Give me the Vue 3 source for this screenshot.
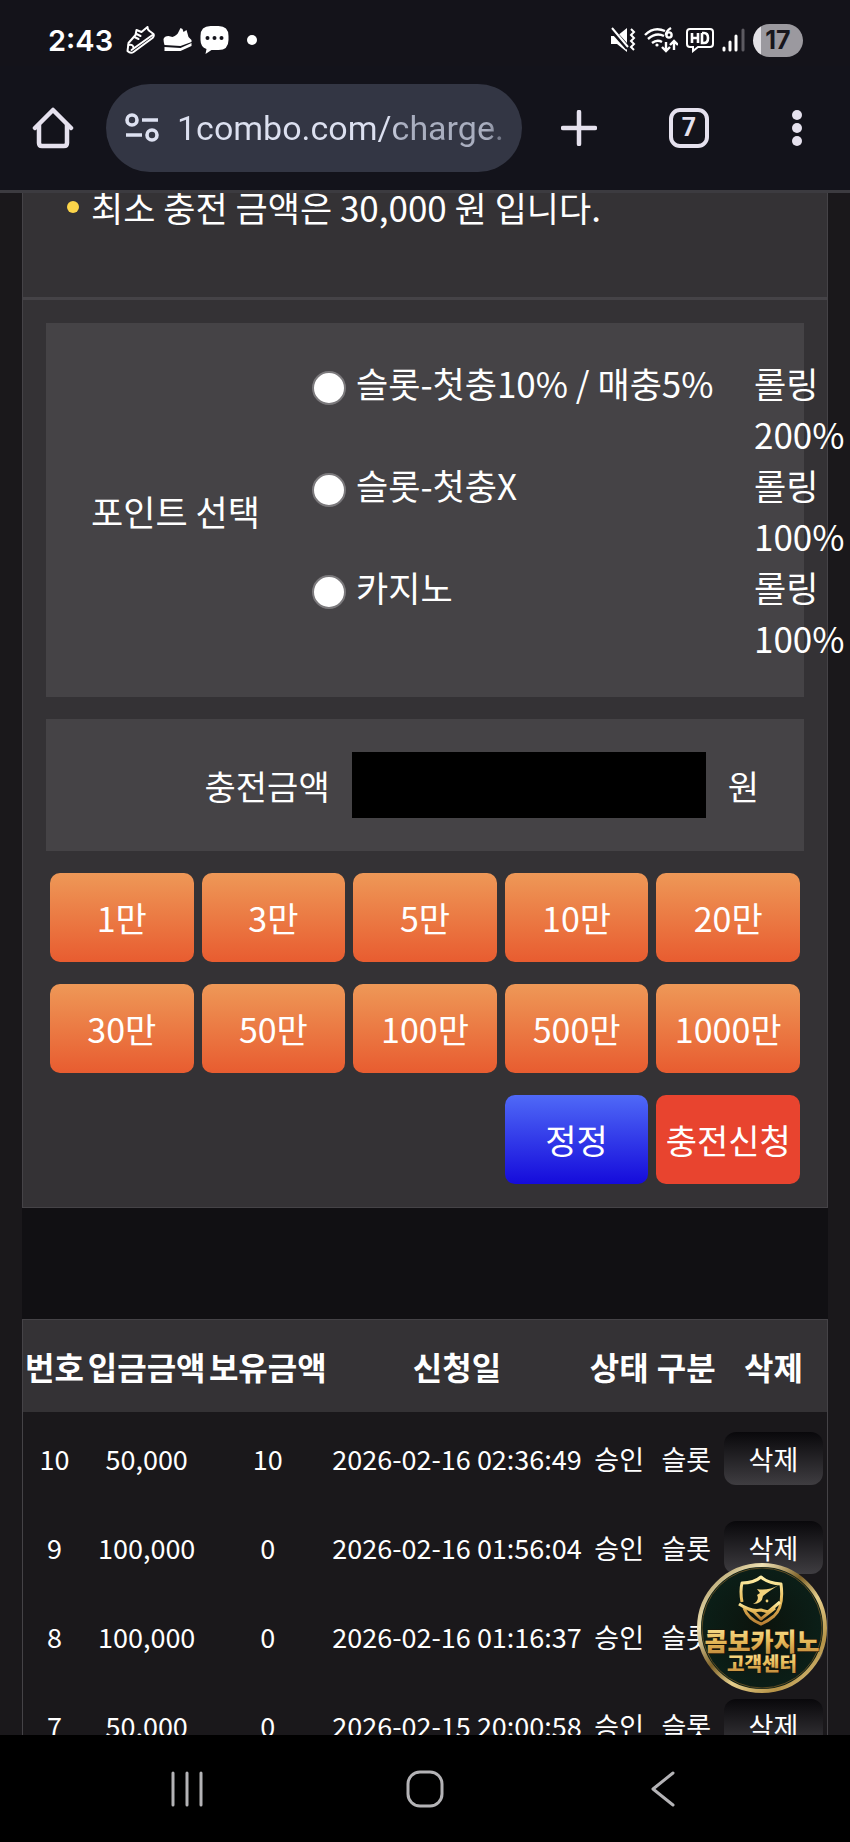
<template>
  <div class="screen">
    <header class="status-bar">
      <div class="status-left">
        <span class="clock">2:43</span>
        <svg class="status-icon" viewBox="0 0 28 28" fill="none" stroke="#fff" stroke-width="2" stroke-linejoin="round" stroke-linecap="round">
          <path d="M1 25 L2 17 L9 9 L10 4 L15 6 L21 1 Q21 4 23 5 L27 8 Q28 10 26 12 L7 26 Q4 28 1 25Z" />
          <path d="M2 19 Q7 18 7 22 M5 24 L26 9 M8 11 l4 2 M10 8 l4 2" />
        </svg>
        <svg class="status-icon" viewBox="0 0 28 28" fill="#fff">
          <path d="M0 13 Q1 10 5 10 L9 11 Q14 9 15 6 L17 2 L19 3 L20 6 L23 4 L25 11 L28 14 L28 16 L17 20 L1 19 Q0 16 0 13Z" />
          <path d="M1 21 L17 22 L28 17 L28 20 L17 25 L1 25Z" />
        </svg>
        <svg class="status-icon" viewBox="0 0 28 28">
          <path d="M10 0 H18 Q28 0 28 10 V14 Q28 24 18 24 H11 L5 28 L6 23 Q0 21 0 14 V10 Q0 0 10 0Z" fill="#fff" />
          <g fill="#14131a">
            <circle cx="7" cy="12" r="2" />
            <circle cx="14" cy="12" r="2" />
            <circle cx="21" cy="12" r="2" />
          </g>
        </svg>
        <span class="more-dot"></span>
      </div>
      <div class="status-right">
        <svg width="25" height="26" viewBox="0 0 25 26" fill="#fff">
          <path d="M0 9 H6 L16 1 V25 L6 17 H0Z" />
          <path d="M0 2 L17 21" stroke="#14131a" stroke-width="5" />
          <path d="M1 1 L17 20 M20 2 l3 3 l-3 3 l3 3 l-3 3 l3 3 l-3 3 l3 3" fill="none" stroke="#fff" stroke-width="2" />
        </svg>
        <svg width="34" height="26" viewBox="0 0 34 26" fill="none" stroke="#fff" stroke-width="2.4">
          <path d="M1 8 Q10 -1 21 4 M4 12 Q12 5 20 9 M8 16 Q13 12 18 15" />
          <circle cx="13" cy="18" r="1.6" fill="#fff" stroke="none" />
          <path d="M27 1 Q22 4 22 8" />
          <circle cx="25" cy="8" r="2.6" />
          <path d="M22 15 V24 M18 20 L22 24 L26 20 M30 23 V14 M26 18 L30 14 L34 18" />
        </svg>
        <svg width="28" height="26" viewBox="0 0 28 26" fill="none" stroke="#fff" stroke-width="2">
          <path d="M4 2 H24 Q27 2 27 5 V17 Q27 20 24 20 H12 L7 24 V20 H4 Q1 20 1 17 V5 Q1 2 4 2Z" />
          <path d="M6 6 V16 M12 6 V16 M6 11 H12 M16 6 V16 H18 Q22 16 22 11 Q22 6 18 6 H16" stroke-width="2.6" />
        </svg>
        <svg width="23" height="24" viewBox="0 0 23 24" stroke="#fff" stroke-width="3" stroke-linecap="round">
          <path d="M2 20 V22 M8 14 V22 M14 8 V22" />
          <path d="M21 2 V22" stroke="#5c5a61" />
        </svg>
        <span class="battery">17</span>
      </div>
    </header>

    <nav class="toolbar">
      <button type="button" class="tool" aria-label="홈">
        <svg width="42" height="42" viewBox="0 0 42 42" fill="none" stroke="#e5e1ee" stroke-width="4.5" stroke-linejoin="round" stroke-linecap="round">
          <path d="M3 21 L21 3 L39 21" />
          <path d="M7 18 V36 Q7 39 10 39 H32 Q35 39 35 36 V18" />
        </svg>
      </button>
      <label class="address">
        <svg width="34" height="30" viewBox="0 0 34 30" fill="none" stroke="#dde1f1" stroke-width="3.6">
          <circle cx="7" cy="7" r="5" />
          <path d="M17 7 H33 M1 22 H17" />
          <circle cx="27" cy="22" r="5" />
        </svg>
        <input v-model="url" type="text" aria-label="주소" spellcheck="false" />
      </label>
      <button type="button" class="tool" aria-label="새 탭">
        <svg width="36" height="36" viewBox="0 0 36 36" stroke="#e5e1ee" stroke-width="4.5" stroke-linecap="round">
          <path d="M18 2 V34 M2 18 H34" />
        </svg>
      </button>
      <button type="button" class="tool"><span class="tab-count">7</span></button>
      <button type="button" class="tool" aria-label="메뉴">
        <svg width="12" height="38" viewBox="0 0 12 38" fill="#e5e1ee">
          <circle cx="6" cy="6" r="5" />
          <circle cx="6" cy="19" r="5" />
          <circle cx="6" cy="32" r="5" />
        </svg>
      </button>
    </nav>

    <div class="viewport">
      <main class="page">
        <ul class="notice">
          <li>최소 충전 금액은 30,000 원 입니다.</li>
        </ul>

        <form class="panel" @submit.prevent>
          <fieldset class="card points">
            <span class="points-title">포인트 선택</span>
            <div class="options">
              <div v-for="(option, i) in options" :key="i" class="option">
                <label>
                  <input v-model="selected" type="radio" name="point" :value="i" />
                  <span>{{ option.name }}</span>
                </label>
                <span class="rolling">롤링 {{ option.rolling }}</span>
              </div>
            </div>
          </fieldset>

          <div class="card amount">
            <label for="amount">충전금액</label>
            <input id="amount" v-model="amount" type="text" />
            <span>원</span>
          </div>

          <div class="buttons">
            <button
              v-for="value in amounts"
              :key="value"
              type="button"
              class="btn"
              @click="addAmount(value)"
            >
              {{ value }}만
            </button>
            <button type="button" class="btn reset" @click="amount = ''">정정</button>
            <button type="submit" class="btn submit">충전신청</button>
          </div>
        </form>

        <table class="history">
          <colgroup>
            <col class="col-no" />
            <col class="col-money" />
            <col class="col-money" />
            <col class="col-date" />
            <col class="col-short" />
            <col class="col-short" />
            <col class="col-delete" />
          </colgroup>
          <thead>
            <tr>
              <th v-for="title in titles" :key="title">{{ title }}</th>
            </tr>
          </thead>
          <tbody>
            <tr v-for="row in rows" :key="row.no">
              <td>{{ row.no }}</td>
              <td>{{ row.deposit }}</td>
              <td>{{ row.balance }}</td>
              <td>{{ row.date }}</td>
              <td>승인</td>
              <td>슬롯</td>
              <td>
                <button type="button" class="delete" @click="removeRow(row.no)">삭제</button>
              </td>
            </tr>
          </tbody>
        </table>
      </main>

      <a href="#support" class="support">
        <svg viewBox="0 0 132 132">
          <defs>
            <linearGradient id="ring" x1="0" y1="0" x2="1" y2="1">
              <stop offset="0" stop-color="#8d7a45" />
              <stop offset="0.25" stop-color="#f0e2b4" />
              <stop offset="0.45" stop-color="#7d6128" />
              <stop offset="0.6" stop-color="#e6cf8d" />
              <stop offset="0.8" stop-color="#b59246" />
              <stop offset="1" stop-color="#efdfa6" />
            </linearGradient>
            <linearGradient id="gold" x1="0" y1="0" x2="0" y2="1">
              <stop offset="0" stop-color="#fff0a8" />
              <stop offset="0.5" stop-color="#e9bd5c" />
              <stop offset="1" stop-color="#b87f34" />
            </linearGradient>
            <radialGradient id="face">
              <stop offset="0" stop-color="#0c130c" />
              <stop offset="1" stop-color="#0b1f18" />
            </radialGradient>
          </defs>
          <circle cx="66" cy="66" r="63" fill="url(#face)" stroke="url(#ring)" stroke-width="4" />
          <circle cx="66" cy="66" r="60" fill="none" stroke="#5b4a22" stroke-width="1" />
          <g fill="none" stroke="url(#gold)" stroke-width="3" stroke-linejoin="round">
            <path d="M46 40 Q44 29 46 21 Q58 21 65 15 Q72 21 85 22 Q88 45 78 54 Q72 59 65 62 Q52 57 48 46" />
            <path d="M43 42 Q55 50 65 48 L72 50 L84 40 M50 46 L58 50 L65 57 L79 46" />
          </g>
          <path d="M61 27 Q72 29 83 23 Q73 29 67 34 Q66 42 57 42 Q64 38 61 33 L64 31Z" fill="#f3d27c" />
          <circle cx="71" cy="39" r="1.4" fill="#f0cf78" />
          <text x="66" y="89" class="support-name">콤보카지노</text>
          <text x="66" y="109" class="support-sub">고객센터</text>
        </svg>
      </a>
    </div>

    <nav class="system-nav">
      <button type="button" aria-label="최근 앱">
        <svg width="36" height="38" viewBox="0 0 36 38" stroke="#b4b3b6" stroke-width="3" stroke-linecap="round">
          <path d="M4 3 V35 M18 3 V35 M32 3 V35" />
        </svg>
      </button>
      <button type="button" aria-label="홈 화면">
        <svg width="38" height="38" viewBox="0 0 38 38" fill="none" stroke="#b4b3b6" stroke-width="3">
          <rect x="2" y="2" width="34" height="34" rx="12" />
        </svg>
      </button>
      <button type="button" aria-label="뒤로">
        <svg width="26" height="38" viewBox="0 0 26 38" fill="none" stroke="#b4b3b6" stroke-width="3" stroke-linecap="round" stroke-linejoin="round">
          <path d="M23 3 L3 19 L23 35" />
        </svg>
      </button>
    </nav>
  </div>
</template>

<script setup>
import { ref } from "vue";

const url = ref("1combo.com/charge.");
const selected = ref(null);
const amount = ref("");

const options = [
  { name: "슬롯-첫충10% / 매충5%", rolling: "200%" },
  { name: "슬롯-첫충X", rolling: "100%" },
  { name: "카지노", rolling: "100%" },
];

const amounts = [1, 3, 5, 10, 20, 30, 50, 100, 500, 1000];

const titles = ["번호", "입금금액", "보유금액", "신청일", "상태", "구분", "삭제"];

const rows = ref([
  { no: 10, deposit: "50,000", balance: 10, date: "2026-02-16 02:36:49" },
  { no: 9, deposit: "100,000", balance: 0, date: "2026-02-16 01:56:04" },
  { no: 8, deposit: "100,000", balance: 0, date: "2026-02-16 01:16:37" },
  { no: 7, deposit: "50,000", balance: 0, date: "2026-02-15 20:00:58" },
]);

const addAmount = (value) => {
  amount.value = String(Number(amount.value) + value * 10000);
};

const removeRow = (no) => {
  rows.value = rows.value.filter((row) => row.no !== no);
};
</script>

<style>
body {
  margin: 0;
  background-color: #1a181b;
}
</style>

<style scoped>
.screen {
  display: flex;
  flex-direction: column;
  height: 100vh;
  overflow: hidden;
  background-color: #1a181b;
  color: #fff;
  font-family: "Noto Sans CJK KR", sans-serif;
  font-size: 34px;
  line-height: 51px;
  word-break: keep-all;
}
button,
input {
  margin: 0;
  padding: 0;
  border: 0;
  color: inherit;
  font: inherit;
}
button {
  background: none;
  cursor: pointer;
}
svg {
  display: block;
}

.status-bar {
  display: flex;
  justify-content: space-between;
  align-items: center;
  height: 52px;
  padding: 14px 47px 0 48px;
  background-color: #14131a;
}
.status-left,
.status-right {
  display: flex;
  align-items: center;
  gap: 8px;
}
.clock {
  margin-right: 5px;
  font-family: Inter, sans-serif;
  font-size: 29px;
  font-weight: 600;
}
.status-icon {
  width: 29px;
  height: 28px;
}
.more-dot {
  width: 10px;
  height: 10px;
  margin-left: 10px;
  border-radius: 50%;
  background-color: #fff;
}
.battery {
  width: 50px;
  border-radius: 17px;
  background: linear-gradient(to right, #e3e1e6 8px, #9b999f 8px);
  color: #17161c;
  font-family: Inter, sans-serif;
  font-size: 25px;
  font-weight: 700;
  line-height: 33px;
  text-align: center;
}

.toolbar {
  display: grid;
  grid-template-columns: 106px minmax(0, 1fr) 110px 110px 106px;
  align-items: center;
  height: 124px;
  border-bottom: 3px solid #3c3b40;
  background-color: #13131b;
}
.tool {
  display: flex;
  justify-content: center;
  align-items: center;
  height: 88px;
}
.address {
  display: flex;
  align-items: center;
  gap: 18px;
  height: 88px;
  margin-right: 2px;
  padding: 0 16px 0 19px;
  box-sizing: border-box;
  border-radius: 44px;
  background-color: #333644;
}
.address svg {
  flex: none;
}
.address input {
  flex: 1;
  min-width: 0;
  outline: none;
  background: linear-gradient(to right, #dce0f0 210px, #a9aebf 225px, #a9aebf 310px, #6a6e7e 325px);
  background-clip: text;
  color: transparent;
  font-family: Roboto, sans-serif;
  font-size: 34px;
}
.tab-count {
  width: 40px;
  box-sizing: border-box;
  border: 4px solid #e5e1ee;
  border-radius: 11px;
  color: #e5e1ee;
  font-family: Roboto, sans-serif;
  font-size: 25px;
  font-weight: 700;
  line-height: 32px;
}

.viewport {
  position: relative;
  flex: 1;
  min-height: 0;
  overflow: hidden;
}
.page {
  margin: 0 22px;
  background-color: #111013;
}
/* the list is scrolled a little under the toolbar */
.notice {
  margin: -12px 0 0;
  padding: 0 44px 65px;
  border: 1px solid #454347;
  border-top: 0;
  border-bottom: 3px solid #454347;
  background-color: #343235;
  font-size: 35px;
  list-style: none;
}
.notice li {
  display: flex;
  align-items: center;
  gap: 12px;
}
.notice li::before {
  content: "";
  width: 12px;
  height: 12px;
  border-radius: 50%;
  background-color: #fcd54a;
}

.panel {
  display: flex;
  flex-direction: column;
  gap: 22px;
  padding: 23px;
  border: 1px solid #454347;
  border-top: 0;
  background-color: #343235;
}
.card {
  display: flex;
  margin: 0;
  border: 0;
  background-color: #454346;
}
.points {
  align-items: center;
  min-width: 0;
  padding: 34px 0 34px 45px;
  font-size: 35px;
}
.points-title {
  flex: none;
  width: 221px;
}
.options {
  flex: 1;
}
.option {
  display: grid;
  grid-template-columns: 1fr 50px;
}
.option label {
  display: flex;
  align-items: flex-start;
  gap: 10px;
}
.option input {
  width: 34px;
  height: 34px;
  margin-top: 14px;
  border: 2px solid #7b797c;
  border-radius: 50%;
  appearance: none;
  background-color: #fff;
}
.option input:checked {
  border: 9px solid #e8442f;
}
.amount {
  align-items: center;
  gap: 22px;
  padding: 33px 45px;
}
.amount label {
  flex: 1;
  text-align: right;
}
.amount input {
  flex: 0 0 53%;
  min-width: 0;
  height: 66px;
  background-color: #000;
}

.buttons {
  display: grid;
  grid-template-columns: repeat(5, 1fr);
  gap: 22px 8px;
  padding: 0 4px;
}
.btn {
  height: 89px;
  border-radius: 10px;
  background: linear-gradient(#ee9857, #e85c30);
  white-space: nowrap;
}
.reset {
  grid-column: 4;
  background: linear-gradient(#4f69f7, #150bdb);
}
.submit {
  background: #e8442f;
}

.history {
  width: 100%;
  margin-top: 111px;
  border: 1px solid #454347;
  border-spacing: 0;
  table-layout: fixed;
  background-color: #1a181b;
  font-size: 27px;
  text-align: center;
}
.col-no {
  width: 63px;
}
.col-money {
  width: 121px;
}
.col-date {
  width: 257px;
}
.col-short {
  width: 67px;
}
.col-delete {
  width: 107px;
}
.history th {
  height: 92px;
  padding: 0;
  background-color: #343235;
  font-size: 32px;
  font-weight: 700;
  white-space: nowrap;
}
.history td {
  padding: 20px 0 16px;
  white-space: nowrap;
}
.delete {
  display: block;
  width: 99px;
  height: 53px;
  margin: 0 auto;
  border-radius: 12px;
  background: linear-gradient(#09080b, #3f3d41);
}

.support {
  position: absolute;
  right: 22px;
  bottom: 41px;
  width: 132px;
}
.support text {
  fill: url(#gold);
  stroke: #1c1406;
  stroke-width: 1px;
  paint-order: stroke;
  font-weight: 900;
  text-anchor: middle;
}
.support-name {
  font-size: 25px;
}
.support-sub {
  font-size: 19px;
}

.system-nav {
  display: flex;
  justify-content: space-around;
  align-items: center;
  height: 107px;
  padding: 0 68px;
  background-color: #000;
}
.system-nav button {
  display: flex;
  justify-content: center;
  width: 80px;
}
</style>
